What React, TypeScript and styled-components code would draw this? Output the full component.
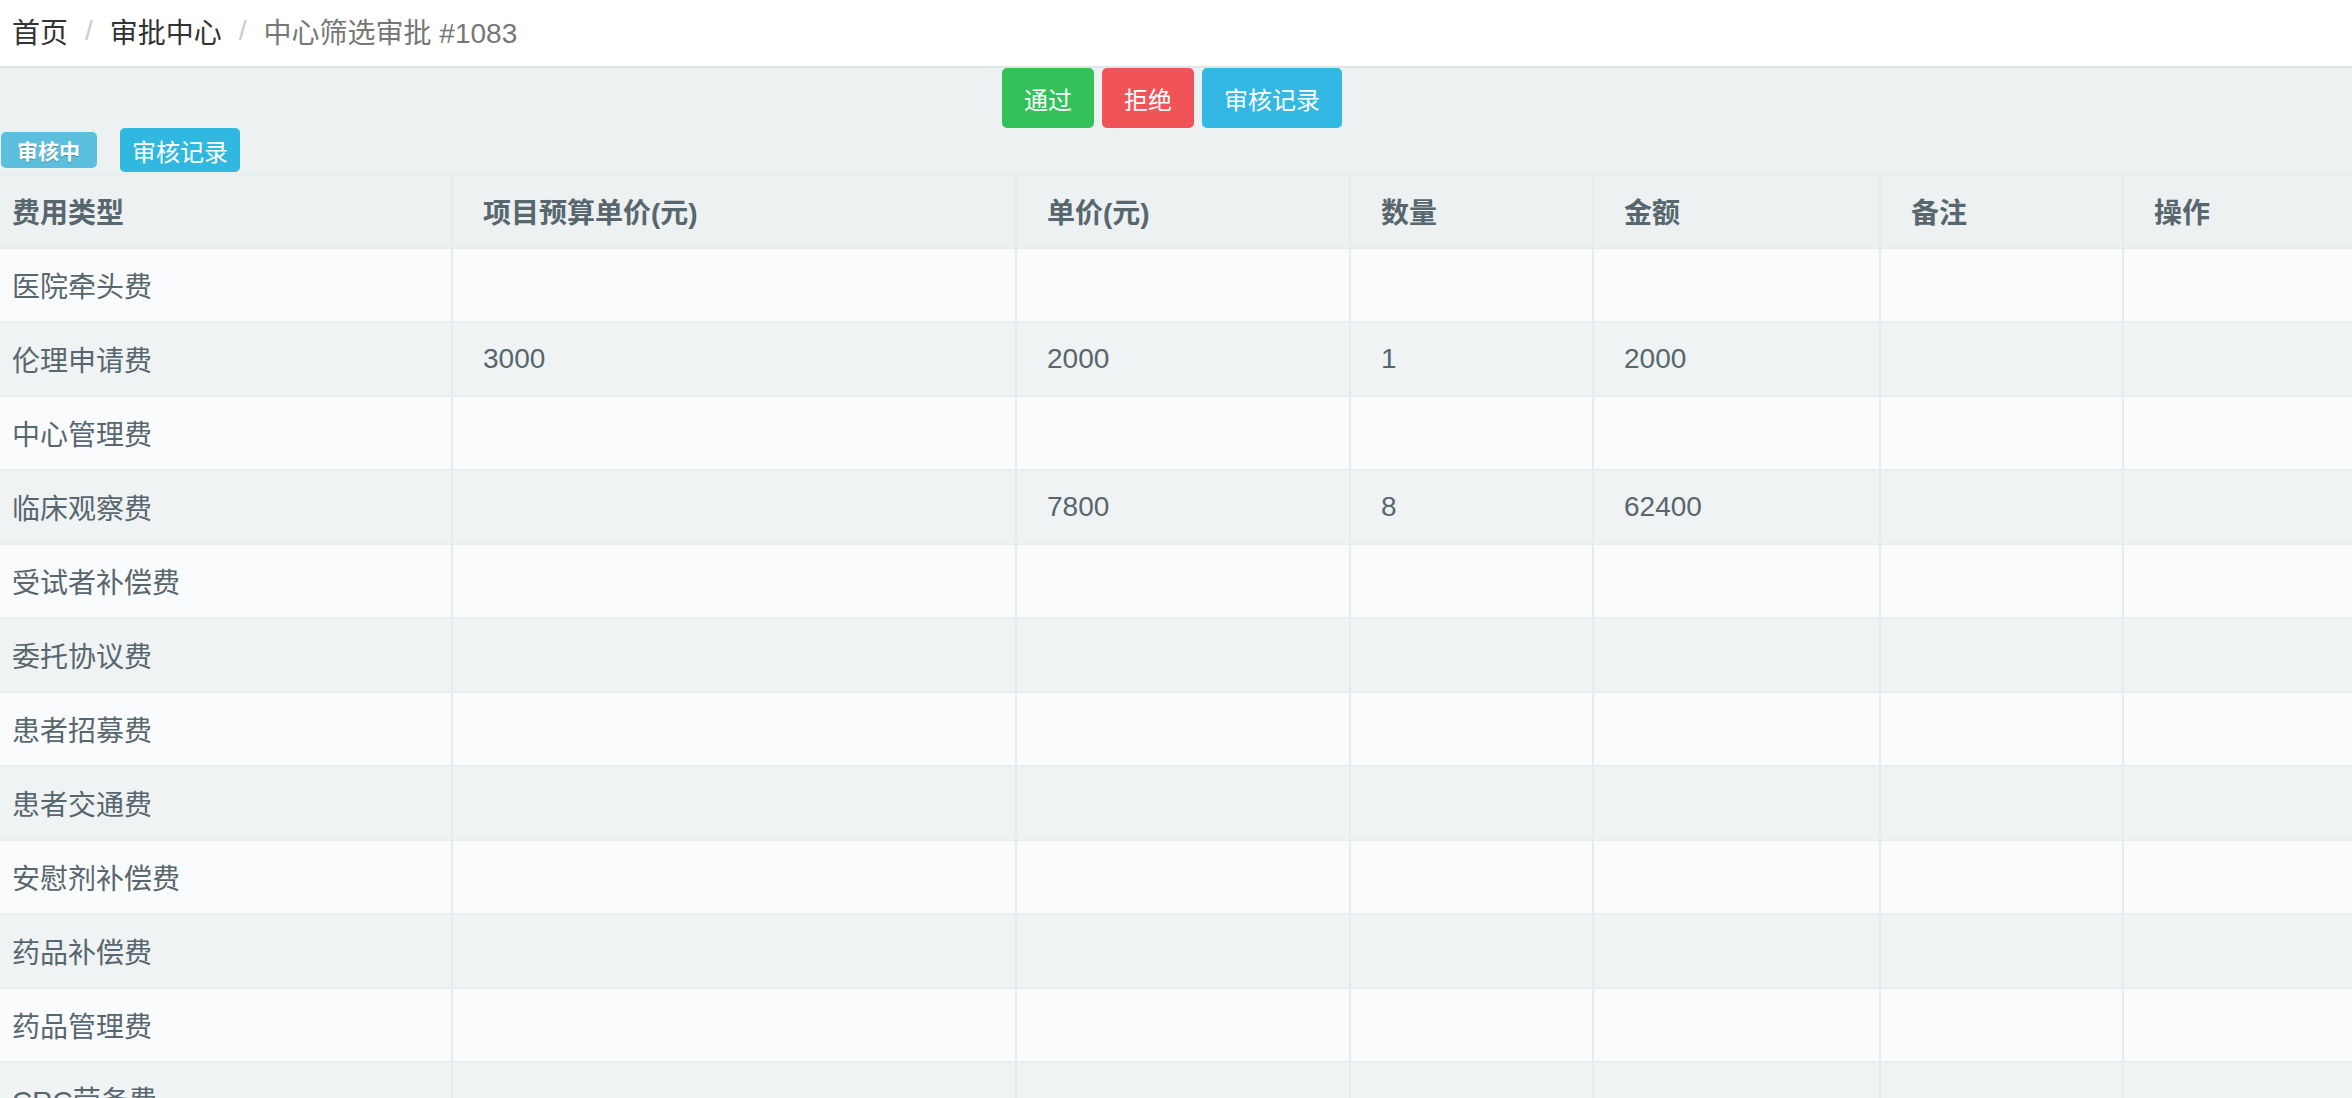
import React from "react";
import styled, { createGlobalStyle } from "styled-components";

const GlobalStyle = createGlobalStyle`
  html, body {
    margin: 0;
    padding: 0;
    background: #edf1f2;
    font-family: "Liberation Sans", "Noto Sans CJK SC", sans-serif;
    color: #58666e;
  }
`;

const TopBar = styled.div`
  height: 66px;
  background: #fff;
  border-bottom: 2px solid #dee5e7;
  display: flex;
  align-items: center;
  padding-left: 12px;
  font-size: 28px;
`;

const Crumb = styled.span<{ active?: boolean }>`
  color: ${(p) => (p.active ? "#777" : "#333")};
  margin-top: -4px;
`;

const Sep = styled.span`
  color: #ccc;
  padding: 0 17px;
  margin-top: -4px;
`;

const Actions = styled.div`
  display: flex;
  justify-content: center;
  gap: 8px;
  padding-right: 8px;
`;

const Btn = styled.button<{ tone: string; small?: boolean }>`
  border: none;
  border-radius: 5px;
  background: ${(p) => p.tone};
  color: #fff;
  font-family: inherit;
  font-size: 24px;
  height: ${(p) => (p.small ? "44px" : "60px")};
  padding: ${(p) => (p.small ? "0 12px" : "0 22px")};
  cursor: pointer;
`;

const StatusRow = styled.div`
  height: 45px;
  display: flex;
  align-items: flex-start;
  gap: 23px;
  padding-left: 1px;
`;

const Label = styled.span`
  margin-top: 4px;
  height: 36px;
  padding: 0 17px 0 16px;
  display: inline-flex;
  align-items: center;
  background: #5bbfdd;
  color: #fff;
  font-size: 21px;
  font-weight: bold;
  border-radius: 5px;
  text-shadow: 0 1px 1px rgba(0, 0, 0, 0.25);
`;

const Table = styled.table`
  width: 100%;
  border-collapse: collapse;
  table-layout: fixed;
  border-top: 2px solid #e8edef;
`;

const HeadCell = styled.th<{ first?: boolean }>`
  height: 72px;
  text-align: left;
  font-size: 28px;
  font-weight: bold;
  color: #58666e;
  padding: 0 0 0 ${(p) => (p.first ? "12px" : "30px")};
  border-left: ${(p) => (p.first ? "none" : "2px solid #e6ebed")};
  border-bottom: 2px solid #e6ebed;
`;

const Row = styled.tr<{ odd: boolean }>`
  background: ${(p) => (p.odd ? "#fafbfc" : "#eff3f4")};
`;

const Cell = styled.td<{ first?: boolean }>`
  height: 72px;
  font-size: 28px;
  color: #58666e;
  padding: 0 0 0 ${(p) => (p.first ? "12px" : "30px")};
  border-left: ${(p) => (p.first ? "none" : "2px solid #e6ebed")};
  border-bottom: 2px solid #e8edef;
  white-space: nowrap;
  overflow: hidden;
`;

const widths = [452, 564, 334, 243, 287, 243, 229];
const headers = ["费用类型", "项目预算单价(元)", "单价(元)", "数量", "金额", "备注", "操作"];

const rows: string[][] = [
  ["医院牵头费", "", "", "", "", "", ""],
  ["伦理申请费", "3000", "2000", "1", "2000", "", ""],
  ["中心管理费", "", "", "", "", "", ""],
  ["临床观察费", "", "7800", "8", "62400", "", ""],
  ["受试者补偿费", "", "", "", "", "", ""],
  ["委托协议费", "", "", "", "", "", ""],
  ["患者招募费", "", "", "", "", "", ""],
  ["患者交通费", "", "", "", "", "", ""],
  ["安慰剂补偿费", "", "", "", "", "", ""],
  ["药品补偿费", "", "", "", "", "", ""],
  ["药品管理费", "", "", "", "", "", ""],
  ["CRC劳务费", "", "", "", "", "", ""],
  ["其他费用", "", "", "", "", "", ""],
];

const App = () => (
  <>
    <GlobalStyle />
    <TopBar>
      <Crumb>首页</Crumb>
      <Sep>/</Sep>
      <Crumb>审批中心</Crumb>
      <Sep>/</Sep>
      <Crumb active>中心筛选审批 #1083</Crumb>
    </TopBar>
    <Actions>
      <Btn tone="#34c15a">通过</Btn>
      <Btn tone="#f05457">拒绝</Btn>
      <Btn tone="#32b8e2">审核记录</Btn>
    </Actions>
    <StatusRow>
      <Label>审核中</Label>
      <Btn tone="#31b8e1" small>
        审核记录
      </Btn>
    </StatusRow>
    <Table>
      <colgroup>
        {widths.map((w, i) => (
          <col key={i} style={{ width: w }} />
        ))}
      </colgroup>
      <thead>
        <tr>
          {headers.map((h, i) => (
            <HeadCell key={h} first={i === 0}>
              {h}
            </HeadCell>
          ))}
        </tr>
      </thead>
      <tbody>
        {rows.map((r, ri) => (
          <Row key={ri} odd={ri % 2 === 0}>
            {r.map((c, ci) => (
              <Cell key={ci} first={ci === 0}>
                {c}
              </Cell>
            ))}
          </Row>
        ))}
      </tbody>
    </Table>
  </>
);

export default App;
